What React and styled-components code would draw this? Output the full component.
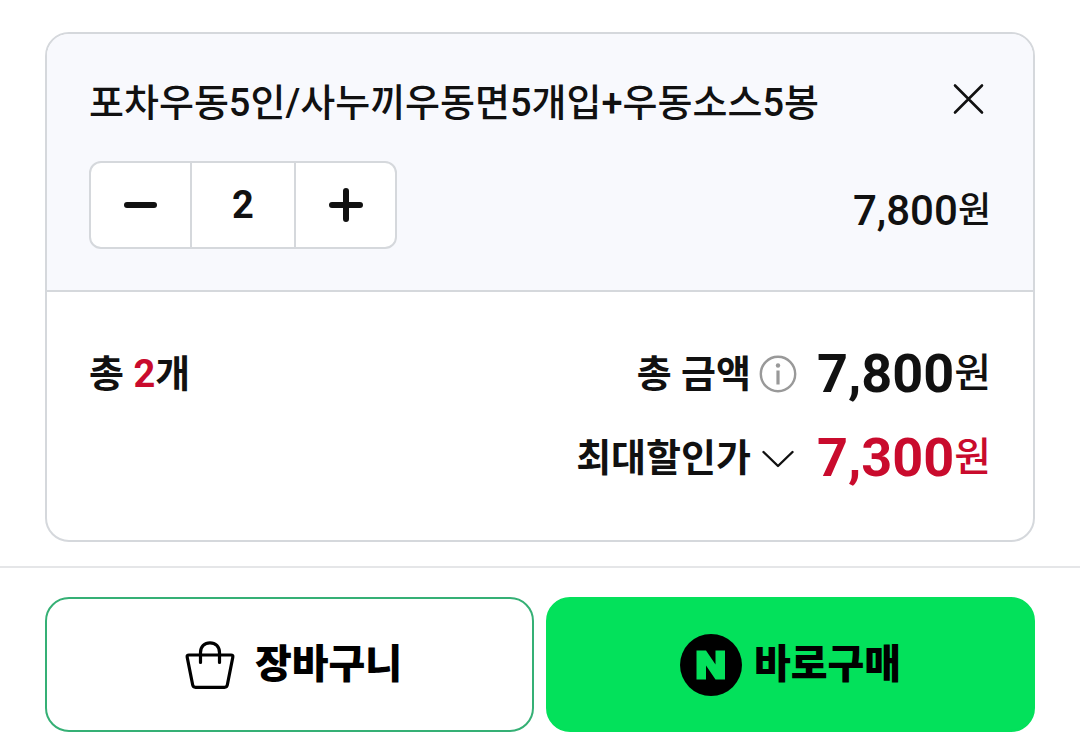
import React, { useState } from "react";
import styled, { createGlobalStyle } from "styled-components";

const GlobalStyle = createGlobalStyle`
  * {
    box-sizing: border-box;
  }
  body {
    margin: 0;
    background: #fff;
    color: #111;
    font-family: Roboto, "Noto Sans CJK KR", sans-serif;
  }
  button,
  input {
    margin: 0;
    padding: 0;
    border: 0;
    background: none;
    color: inherit;
    font: inherit;
  }
  button {
    cursor: pointer;
  }
  svg {
    display: block;
    flex: none;
  }
`;

const CloseIcon = () => (
  <svg width="32" height="32" viewBox="0 0 32 32" fill="none" stroke="#111" strokeWidth="2.6" strokeLinecap="round">
    <path d="M2 2.5 29 29.5M29 2.5 2 29.5" />
  </svg>
);

const MinusIcon = () => (
  <svg width="36" height="36" viewBox="0 0 36 36" stroke="#111" strokeWidth="6" strokeLinecap="round">
    <path d="M4 18H31" />
  </svg>
);

const PlusIcon = () => (
  <svg width="36" height="36" viewBox="0 0 36 36" stroke="#111" strokeWidth="6" strokeLinecap="round">
    <path d="M4 18H32M18 4V32" />
  </svg>
);

const InfoIcon = () => (
  <svg width="38" height="38" viewBox="0 0 38 38" fill="none">
    <circle cx="19" cy="19" r="17.2" stroke="#999" strokeWidth="2.4" />
    <circle cx="19" cy="10.5" r="2.2" fill="#999" />
    <path d="M19 15.5V29.5" stroke="#999" strokeWidth="3.2" />
  </svg>
);

const ChevronIcon = () => (
  <svg width="38" height="38" viewBox="0 0 38 38" fill="none" stroke="#111" strokeWidth="2.4" strokeLinecap="round" strokeLinejoin="round">
    <path d="M4.5 13 19 27 33.5 13" />
  </svg>
);

const BagIcon = () => (
  <svg width="58" height="50" viewBox="-8 0 58 50" fill="none" stroke="#000" strokeWidth="3.2" strokeLinecap="round" strokeLinejoin="round">
    <path d="M4 15H46Q48.3 15 47.8 17.2L42.3 45Q41.8 47.3 39.5 47.3H10.5Q8.2 47.3 7.7 45L2.2 17.2Q1.7 15 4 15Z" />
    <path d="M15.5 22.5V12.5C15.5 6.5 19.5 2.8 25 2.8S34.5 6.5 34.5 12.5V22.5" />
  </svg>
);

const NaverLogo = () => (
  <svg width="62" height="62" viewBox="0 0 62 62">
    <circle cx="31" cy="31" r="31" fill="#000" />
    <path d="M16.5 16.5H26L35.5 30.5V16.5H45V45.5H35.5L26 31.5V45.5H16.5Z" fill="#03e15b" />
  </svg>
);

const App = () => {
  const [count, setCount] = useState(2);

  return (
    <>
      <GlobalStyle />
      <main>
        <Card>
          <Option>
            <OptionHead>
              <Title>포차우동5인/사누끼우동면5개입+우동소스5봉</Title>
              <IconButton type="button" aria-label="삭제">
                <CloseIcon />
              </IconButton>
            </OptionHead>
            <OptionBody>
              <Stepper>
                <StepButton
                  type="button"
                  aria-label="수량 감소"
                  onClick={() => setCount(Math.max(1, count - 1))}
                >
                  <MinusIcon />
                </StepButton>
                <StepInput
                  type="text"
                  inputMode="numeric"
                  aria-label="수량"
                  value={count}
                  onChange={(e) => setCount(Number(e.target.value) || 1)}
                />
                <StepButton
                  type="button"
                  aria-label="수량 증가"
                  onClick={() => setCount(count + 1)}
                >
                  <PlusIcon />
                </StepButton>
              </Stepper>
              <OptionPrice>
                7,800<Won>원</Won>
              </OptionPrice>
            </OptionBody>
          </Option>
          <Summary>
            <TotalCount>
              총 <em>{count}</em>개
            </TotalCount>
            <Amounts>
              <AmountRow>
                <Label>총 금액</Label>
                <IconButton type="button" aria-label="총 금액 안내">
                  <InfoIcon />
                </IconButton>
                <Amount>
                  7,800<Won $large>원</Won>
                </Amount>
              </AmountRow>
              <AmountRow>
                <Label>최대할인가</Label>
                <IconButton type="button" aria-label="할인 내역 펼치기">
                  <ChevronIcon />
                </IconButton>
                <Amount $sale>
                  7,300<Won $large>원</Won>
                </Amount>
              </AmountRow>
            </Amounts>
          </Summary>
        </Card>
        <Footer>
          <ActionButton type="button" $gap="20px">
            <BagIcon />
            <ActionText>장바구니</ActionText>
          </ActionButton>
          <ActionButton type="button" $primary $gap="12px">
            <NaverLogo />
            <ActionText>바로구매</ActionText>
          </ActionButton>
        </Footer>
      </main>
    </>
  );
};

const Card = styled.section`
  margin: 32px 45px 24px;
  border: 2px solid #d5d8dc;
  border-radius: 24px;
  overflow: hidden;
`;

const Option = styled.div`
  padding: 43px 42px 41px;
  border-bottom: 2px solid #d5d8dc;
  background: #f8f9fd;
`;

const OptionHead = styled.div`
  display: flex;
  align-items: flex-start;
  justify-content: space-between;
  padding-right: 6px;
  margin-bottom: 32px;
`;

const Title = styled.h1`
  margin: 0;
  font-size: 38px;
  font-weight: 500;
  line-height: 52px;
`;

const IconButton = styled.button`
  display: flex;
  align-items: center;
  padding: 6px 0;
`;

const OptionBody = styled.div`
  display: flex;
  align-items: flex-end;
  justify-content: space-between;
`;

const Stepper = styled.div`
  display: flex;
  height: 88px;
  border: 2px solid #d5d8dc;
  border-radius: 12px;
  background: #fff;
  overflow: hidden;
`;

const StepButton = styled.button`
  display: flex;
  align-items: center;
  justify-content: center;
  width: 99px;
`;

const StepInput = styled.input`
  width: 106px;
  border: solid #d5d8dc;
  border-width: 0 2px;
  border-radius: 0;
  font-size: 38px;
  font-weight: 700;
  text-align: center;
`;

const OptionPrice = styled.strong`
  display: flex;
  align-items: center;
  font-size: 42px;
  font-weight: 500;
  line-height: 76px;
`;

const Won = styled.span`
  font-size: ${({ $large }) => ($large ? "40px" : "36px")};
  font-weight: 500;
`;

const Summary = styled.div`
  display: flex;
  justify-content: space-between;
  padding: 50px 42px;
`;

const TotalCount = styled.p`
  margin: 0;
  font-size: 38px;
  font-weight: 700;
  line-height: 64px;

  em {
    color: #c90b2d;
    font-style: normal;
  }
`;

const Amounts = styled.div`
  display: flex;
  flex-direction: column;
  gap: 20px;
`;

const AmountRow = styled.div`
  display: flex;
  align-items: center;
  justify-content: flex-end;
  height: 64px;
`;

const Label = styled.span`
  margin-right: 8px;
  font-size: 38px;
  font-weight: 700;
  line-height: 64px;
`;

const Amount = styled.strong`
  display: flex;
  align-items: center;
  margin-left: 20px;
  color: ${({ $sale }) => ($sale ? "#c90b2d" : "inherit")};
  font-size: 54px;
  font-weight: 700;
  line-height: 64px;
`;

const Footer = styled.footer`
  display: flex;
  gap: 12px;
  padding: 29px 45px 23px;
  border-top: 2px solid #e5e6e8;
`;

const ActionButton = styled.button`
  display: flex;
  flex: 1;
  align-items: center;
  justify-content: center;
  gap: ${({ $gap }) => $gap};
  height: 135px;
  border: 2px solid ${({ $primary }) => ($primary ? "#03e15b" : "#35b075")};
  border-radius: 24px;
  background: ${({ $primary }) => ($primary ? "#03e15b" : "#fff")};
  color: #000;
`;

const ActionText = styled.span`
  font-size: 40px;
  font-weight: 900;
  line-height: 64px;
`;

export default App;
